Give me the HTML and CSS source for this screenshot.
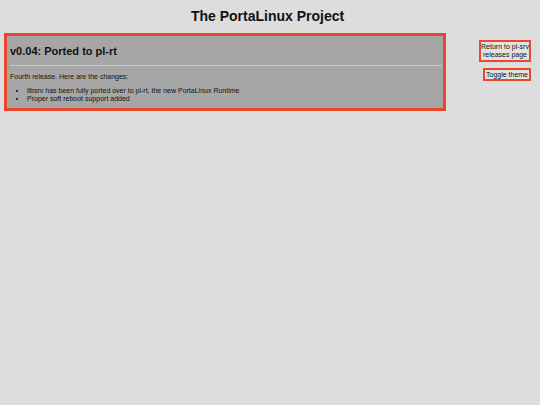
FILE: index.html
```html
<!DOCTYPE html>
<html lang="en">
<head>
  <meta charset="UTF-8">
  <title>The PortaLinux Project - v0.04</title>
  <link rel="stylesheet" href="styles.css">
</head>
<body>
  <h1 class="site-title">The PortaLinux Project</h1>
  <div class="layout">
    <main class="release">
      <h2>v0.04: Ported to pl-rt</h2>
      <hr>
      <p>Fourth release. Here are the changes:</p>
      <ul>
        <li>libsrv has been fully ported over to pl-rt, the new PortaLinux Runtime</li>
        <li>Proper soft reboot support added</li>
      </ul>
    </main>
    <aside class="sidebar">
      <button class="side-btn back-btn" onclick="window.location.href='pl-srv.html'">Return to pl-srv releases page</button>
      <button class="side-btn" id="themeBtn">Toggle theme</button>
    </aside>
  </div>
  <script>
    // Theme toggle
    document.getElementById('themeBtn').addEventListener('click', () => document.body.classList.toggle('dark'));
  </script>
</body>
</html>
```
FILE: styles.css
```css
body {
  margin: 0;
  padding: 0 9px 0 4px;
  min-height: 100vh;
  box-sizing: border-box;
  background: #dddddd;
  color: #111;
  font-family: 'Liberation Sans', Arial, sans-serif;
}
body.dark {
  background: #222;
  color: #eee;
}
.site-title {
  margin: 8px 0 9px 0;
  font-size: 14px;
  line-height: 16px;
  font-weight: bold;
  text-align: center;
}
.layout {
  display: flex;
  justify-content: space-between;
  align-items: flex-start;
}
.release {
  width: 442px;
  box-sizing: border-box;
  padding: 0 1px 0 3px;
  border: 3px solid #e8482b;
  background: #a6a6a6;
}
.release h2 {
  margin: 9px 0 0 0;
  font-size: 11px;
  line-height: 13px;
  font-weight: bold;
}
.release hr {
  margin: 7px 0 0 0;
  border: none;
  border-top: 1px solid #c6c6c6;
}
.release p {
  margin: 7px 0 0 0;
  font-size: 7px;
  line-height: 8px;
}
.release ul {
  margin: 6px 0 0 0;
  padding: 0 0 5px 17px;
  font-size: 7px;
  line-height: 8px;
}
.sidebar {
  width: 52px;
  margin-top: 7px;
  display: flex;
  flex-direction: column;
  align-items: flex-end;
  gap: 6px;
}
.side-btn {
  margin: 0;
  padding: 1px 1px 0 1px;
  border: 2px solid #e8482b;
  background: #e2e2e2;
  color: #111;
  font-family: 'Liberation Sans', Arial, sans-serif;
  font-size: 7px;
  line-height: 8px;
  text-align: center;
  cursor: pointer;
}
.back-btn {
  width: 52px;
  padding: 1px 0;
}
```
